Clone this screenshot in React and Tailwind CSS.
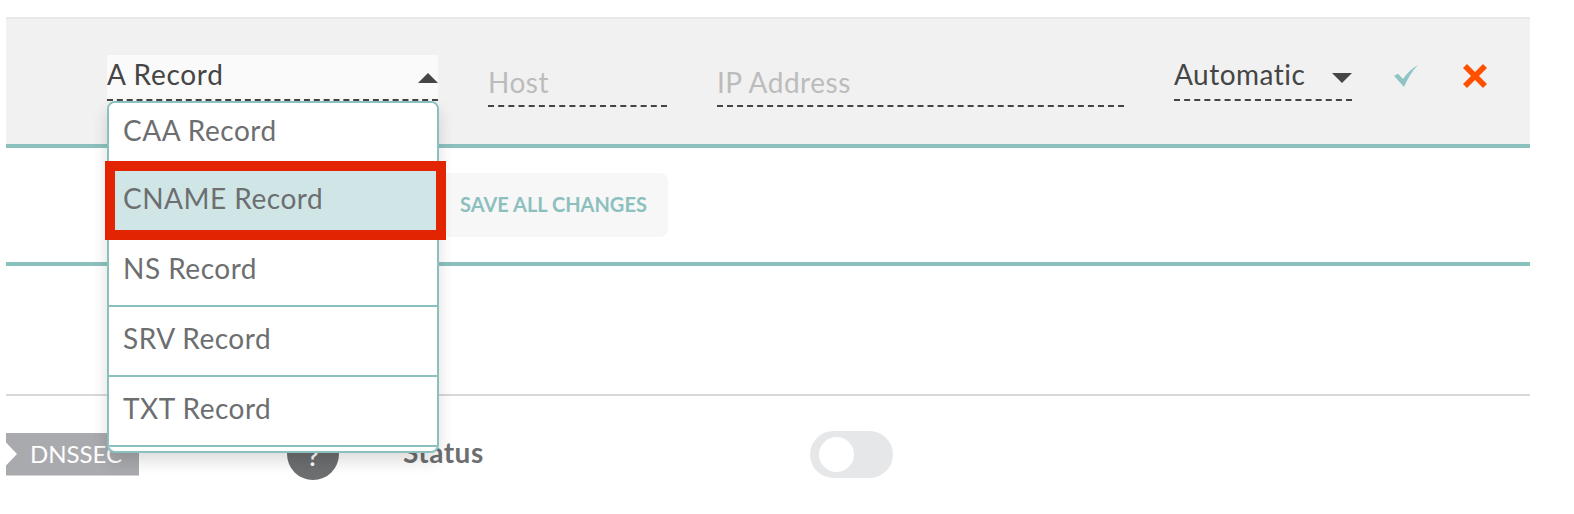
import React from 'react';

const records = [
  { name: 'CAA Record', height: 'h-[64px]', pad: 'pb-[9px]' },
  { name: 'CNAME Record', height: 'h-[70px]', pad: 'pb-[6px]', active: true },
  { name: 'NS Record', height: 'h-[70px]', pad: 'pb-[6px]' },
  { name: 'SRV Record', height: 'h-[70px]', pad: 'pb-[6px]' },
  { name: 'TXT Record', height: 'h-[70px]', pad: 'pb-[6px]' },
];

function Caret({ up, className }) {
  return (
    <svg viewBox="0 0 20 10" className={className} fill="#454545">
      <path d={up ? 'M10 0 L20 10 L0 10 Z' : 'M0 0 L20 0 L10 10 Z'} />
    </svg>
  );
}

function RecordSelect() {
  return (
    <div className="relative w-[331px] shrink-0">
      <div className="h-[46px] bg-[#fafafa] border-b-2 border-dashed border-[#444] flex items-start justify-between">
        <span className="text-[28px] tracking-[0.7px] leading-[39px] text-[#454545]">A Record</span>
        <Caret up className="w-[20px] h-[10px] mt-[18px]" />
      </div>
      <div className="absolute left-0 top-[46px] w-[332px] h-[352px] bg-white border-2 border-[#8cc0be] rounded-[8px] overflow-hidden shadow-[0_8px_16px_rgba(0,0,0,0.14)] z-10">
        {records.map(r => (
          <div key={r.name} className={`${r.height} ${r.pad} ${r.active ? 'bg-[#d0e6e6]' : 'bg-white'} border-b-2 border-[#8cc0be] pl-[14px] flex items-center text-[28px] tracking-[0.5px] text-[#6d6e70]`}>
            {r.name}
          </div>
        ))}
      </div>
      {/* highlight drawn on top of the list */}
      <div className="absolute left-[-2px] top-[106px] w-[341px] h-[79px] border-[10px] border-[#e32400] z-20" />
    </div>
  );
}

function Field({ label, className }) {
  return (
    <div className={`${className} h-[52px] border-b-2 border-dashed border-[#444] text-[28px] tracking-[0.5px] leading-[54px] text-[#bcbcbc] shrink-0`}>
      {label}
    </div>
  );
}

export default function App() {
  return (
    <div className="w-full h-[514px] overflow-hidden bg-white pt-[17px] pl-[6px] pr-[44px] font-['Lato',sans-serif]">
      <div className="h-[131px] bg-[#f1f1f1] border-t-2 border-b-4 border-t-[#e8e8e8] border-b-[#8cc0be] pt-[36px] pl-[101px] flex items-start">
        <RecordSelect />
        <Field label="Host" className="w-[179px] ml-[50px]" />
        <Field label="IP Address" className="w-[407px] ml-[50px]" />
        <div className="w-[178px] ml-[50px] h-[46px] border-b-2 border-dashed border-[#444] flex items-start justify-between shrink-0">
          <span className="text-[28px] tracking-[0.5px] leading-[39px] text-[#454545]">Automatic</span>
          <Caret className="w-[20px] h-[10px] mt-[18px]" />
        </div>
        <svg viewBox="0 0 24 22" className="w-[24px] h-[22px] ml-[42px] mt-[10px]" fill="#8fc4c4">
          <path d="M0 10.7 L4 8.7 L9 14 C13 8 18 3.5 24 0 C18 6 13.5 14 10 22 Z" />
        </svg>
        <svg viewBox="0 0 24 24" className="w-[24px] h-[24px] ml-[45px] mt-[9px]" fill="#ff5000">
          <path d="M4 0 L12 8 L20 0 L24 4 L16 12 L24 20 L20 24 L12 16 L4 24 L0 20 L8 12 L0 4 Z" />
        </svg>
      </div>

      <div className="h-[118px] border-b-4 border-[#8cc0be] pt-[25px] pl-[434px]">
        <div className="w-[228px] h-[64px] bg-[#f7f7f7] rounded-[8px] flex items-center pl-[20px] pb-[3px] text-[20px] font-bold text-[#8cc0be] whitespace-nowrap">
          SAVE ALL CHANGES
        </div>
      </div>

      <div className="h-[130px] border-b-2 border-[#d8d8d8]" />

      <div className="mt-[32px] flex items-center h-[52px]">
        <div className="w-[133px] h-[43px] bg-[#a9aaae] text-white text-[24px] flex items-center pl-[24px] [clip-path:polygon(0_0,100%_0,100%_100%,0_100%,0_33px,11px_50%,0_10px)]">
          DNSSEC
        </div>
        <div className="w-[52px] h-[52px] ml-[148px] pt-[5px] rounded-full bg-[#6d6e70] text-white text-[24px] font-bold flex items-center justify-center">?</div>
        <span className="ml-[64px] pb-[4px] text-[28px] tracking-[0.5px] font-bold text-[#6d6e70]">Status</span>
        <div className="w-[83px] h-[47px] ml-[326px] rounded-full bg-[#e6e7e8] flex items-center pl-[9px]">
          <div className="w-[35px] h-[35px] rounded-full bg-white" />
        </div>
      </div>
    </div>
  );
}
